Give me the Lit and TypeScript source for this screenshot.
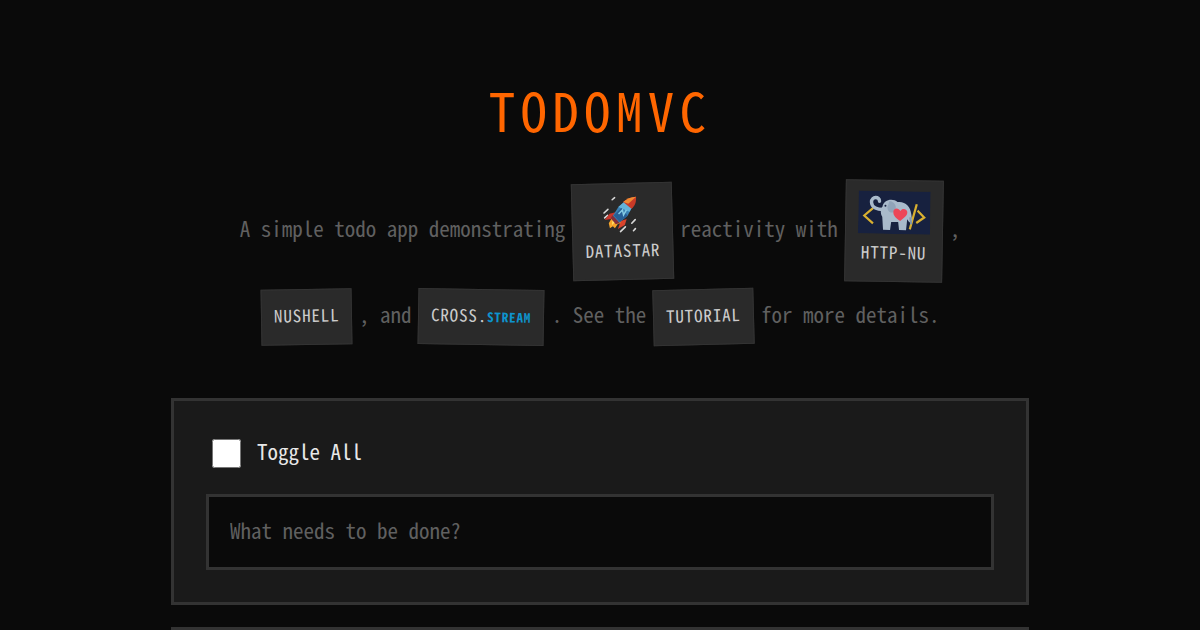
import { LitElement, html, css } from "lit";
import { customElement, state } from "lit/decorators.js";

const rocket = html`<svg class="rocket" viewBox="0 0 43 41" aria-hidden="true">
  <g stroke="#d8d8d8" stroke-width="1.600" stroke-linecap="round">
    <path d="M12 5.500l2.500-2" /><path d="M3.500 18.500l4-3.500" /><path d="M4 23.500l3-2.500" />
    <path d="M19.500 37.500l5-4.500" /><path d="M31 29.500l3.500-3.500" /><path d="M32.500 37l2-2" />
  </g>
  <path d="M15 18l-6 1.500-5 6 8-1z" fill="#c9362b" />
  <path d="M26 25l-2 6-7 4 3-8z" fill="#d8432c" />
  <path d="M11 24l-3 5 1 5 3-2 2 2 3-4 3-1-3-5z" fill="#f6a42a" />
  <path d="M12 25l-1 6 3-3 3 1z" fill="#ffe06b" />
  <path d="M12 22l6-9 7-6 7 6-5 9-9 7z" fill="#3b82b5" />
  <path d="M18 13l7-6 7 6-3 5z" fill="#64b3d8" />
  <path d="M13 21l8-7 6 8-8 6z" fill="#275f96" />
  <path d="M18 20l4-4 1 5 3-5" fill="none" stroke="#84cce4" stroke-width="1.500" />
  <path d="M23 8c3-3 8-5 13-5 0 5-1 9-5 12z" fill="#c83a27" />
  <path d="M23 8c3-3 8-5 13-5l-8 7z" fill="#f08a32" />
  <path d="M12 21l7 8-4 1-5-6z" fill="#812e3b" />
</svg>`;

const elephant = html`<svg class="elephant" viewBox="0 0 72 43" aria-hidden="true">
  <rect width="72" height="43" fill="#17213f" />
  <g fill="none" stroke="#d9b030" stroke-width="2.200" stroke-linecap="square">
    <path d="M14 18L6 25l8 7" /><path d="M58 14l-6 23" /><path d="M60 20l6 6-7 5" />
  </g>
  <path d="M21 10.500c0-5-8-5-8 1 0 5 6 8 14 7" fill="none" stroke="#a9bacb" stroke-width="3.400" stroke-linecap="round" />
  <path d="M24 16c1-8 11-9 15-5 8-1 13 4 14 12l1 7-3 1-2-3-1 11h-7l-1-8h-7l-1 8h-7l-1-13c-2-3-2-8 0-10z" fill="#a9bacb" />
  <path d="M31 10c6 1 8 6 5 11-4 2-7-1-7-5" fill="#91a4b9" />
  <path d="M52 26l1 7" stroke="#8195aa" stroke-width="2" />
  <circle cx="27" cy="15" r="1" fill="#17213f" />
  <path d="M42 30c-4-3-7-5-7-9 0-4 5-5 7-1 2-4 7-2 7 1 0 4-4 6-7 9z" fill="#ed4658" />
</svg>`;

@customElement("app-root")
export class AppRoot extends LitElement {
  @state() private draft = "";

  static styles = css`
    :host {
      display: block;
      min-height: 100vh;
      box-sizing: border-box;
      overflow: hidden;
      background: #0a0a0a;
      color: #e8e8e8;
      font: 21px/32px "Noto Sans Mono CJK JP", "Noto Sans Mono CJK SC", "Liberation Mono", monospace;
    }
    * { box-sizing: border-box; }
    .page {
      max-width: 858px;
      margin: 0 auto;
      padding-top: 69px;
    }
    h1 {
      margin: 0;
      color: #ff6600;
      font-size: 53px;
      font-weight: 400;
      line-height: 80px;
      letter-spacing: 0.1em;
      text-align: center;
      text-transform: uppercase;
    }
    .intro {
      display: flex;
      flex-wrap: wrap;
      justify-content: center;
      align-items: center;
      gap: 7px;
      max-width: 800px;
      margin: 31px auto 53px;
      color: #606060;
    }
    .text { padding-bottom: 6px; }
    .badge {
      display: flex;
      flex-direction: column;
      align-items: center;
      padding: 10px 12px 14px;
      border: 1px solid #333;
      background: #2a2a2a;
      color: #ccc;
      font-size: 17px;
      line-height: 30px;
      letter-spacing: 0.05em;
      text-decoration: none;
      text-transform: uppercase;
    }
    .left { transform: rotate(-1deg); }
    .far-left { transform: rotate(-1.5deg); }
    .right { transform: rotate(1deg); }
    .rocket { width: 43px; height: 41px; }
    .elephant { width: 72px; height: 43px; margin-bottom: 3px; }
    .stream { color: #0d94ce; font-size: 13px; font-weight: 700; line-height: 13px; }
    .panel {
      margin-bottom: 22px;
      padding: 32px;
      border: 3px solid #333;
      background: #1a1a1a;
    }
    .toggle {
      display: flex;
      align-items: center;
      gap: 16px;
      padding: 1px 6px;
      margin-bottom: 21px;
    }
    .toggle input { width: 29px; height: 29px; margin: 0; }
    .toggle .text { padding-bottom: 4px; }
    .entry {
      display: block;
      width: 100%;
      padding: 17px 21px 21px;
      border: 3px solid #333;
      border-radius: 0;
      outline: none;
      background: #0a0a0a;
      color: inherit;
      font: inherit;
    }
    .toggle { min-height: 40px; }
    .entry::placeholder { color: #606060; }
  `;

  render() {
    return html`
      <main class="page">
        <h1>TodoMVC</h1>
        <div class="intro">
          <span class="text">A simple todo app demonstrating</span>
          <a class="badge far-left" href="#datastar">${rocket}<span>Datastar</span></a>
          <span class="text">reactivity with</span>
          <a class="badge right" href="#http-nu">${elephant}<span>http-nu</span></a>
          <span class="text">,</span>
          <a class="badge left" href="#nushell">Nushell</a>
          <span class="text">, and</span>
          <a class="badge right" href="#cross-stream"><span>cross.<span class="stream">stream</span></span></a>
          <span class="text">. See the</span>
          <a class="badge far-left" href="#tutorial">Tutorial</a>
          <span class="text">for more details.</span>
        </div>
        <section class="panel">
          <label class="toggle"><input type="checkbox" /><span class="text">Toggle All</span></label>
          <input
            class="entry"
            type="text"
            aria-label="New todo"
            placeholder="What needs to be done?"
            .value=${this.draft}
            @input=${(e: Event) => (this.draft = (e.target as HTMLInputElement).value)}
          />
        </section>
        <section class="panel" aria-label="Todos"></section>
      </main>
    `;
  }
}
